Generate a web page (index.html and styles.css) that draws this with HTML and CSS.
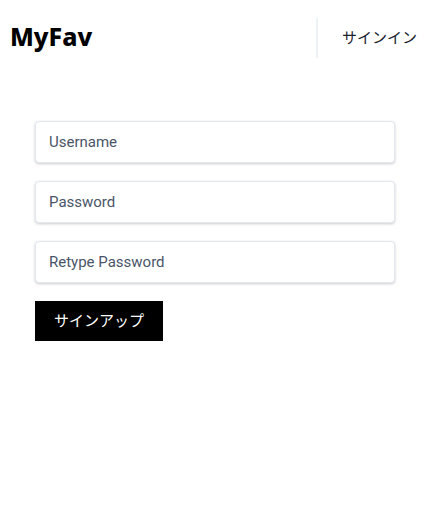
FILE: index.html
```html
<!DOCTYPE html>
<html lang="ja">
<head>
<meta charset="utf-8">
<meta name="viewport" content="width=device-width, initial-scale=1">
<title>MyFav</title>
<link rel="stylesheet" href="styles.css">
</head>
<body>
<header class="header">
  <a class="brand" href="#">MyFav</a>
  <nav class="nav"><a class="nav-link" href="#">サインイン</a></nav>
</header>
<main class="main">
  <form class="form">
    <input class="field" type="text" placeholder="Username" aria-label="Username">
    <input class="field" type="password" placeholder="Password" aria-label="Password">
    <input class="field" type="password" placeholder="Retype Password" aria-label="Retype Password">
    <button class="submit" type="button">サインアップ</button>
  </form>
</main>
</body>
</html>
```
FILE: styles.css
```css
* {
  box-sizing: border-box;
}

body {
  margin: 0;
  background: #fff;
  color: #1a202c;
  font-family: Roboto, "Noto Sans CJK JP", sans-serif;
  font-size: 15px;
  line-height: 24px;
}

a {
  color: inherit;
  text-decoration: none;
}

.header {
  display: flex;
  align-items: flex-start;
  justify-content: space-between;
  padding: 18px 13px 0 10px;
}

.brand {
  color: #000;
  font-family: "Noto Sans", sans-serif;
  font-size: 25px;
  font-weight: 800;
  line-height: 36px;
}

.nav {
  border-left: 2px solid #edf2f7;
  padding: 8px 0 8px 24px;
}

.nav-link {
  display: block;
}

.main {
  padding: 63px 35px;
}

.form {
  display: flex;
  flex-direction: column;
  align-items: flex-start;
  gap: 18px;
}

.field {
  width: 100%;
  height: 42px;
  padding: 8px 13px;
  border: 1px solid #e2e8f0;
  border-radius: 4px;
  background: #fff;
  box-shadow: 0 1px 3px rgba(0, 0, 0, 0.2);
  color: #4a5568;
  font: inherit;
}

.field::placeholder {
  color: #4a5568;
  opacity: 1;
}

.submit {
  height: 40px;
  padding: 0 19px;
  border: 0;
  background: #000;
  color: #fff;
  font: inherit;
}
```
